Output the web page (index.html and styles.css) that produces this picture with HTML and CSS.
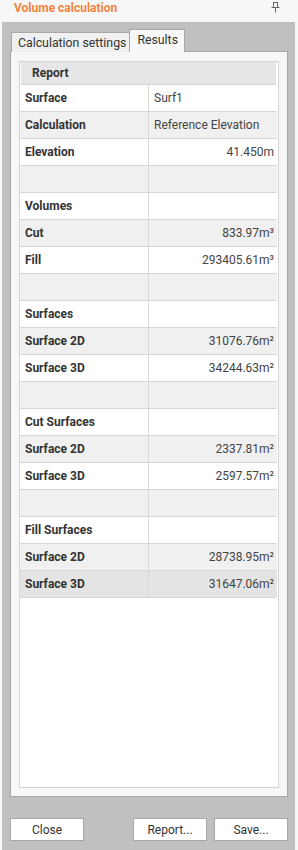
FILE: index.html
```html
<!DOCTYPE html>
<html lang="en">
<head>
  <meta charset="UTF-8" />
  <title>Volume calculation</title>
  <link rel="stylesheet" href="styles.css">
</head>
<body>
  <div class="window">
    <div class="titlebar">
      <span class="title">Volume calculation</span>
      <svg class="pin" width="9" height="11" viewBox="0 0 9 11">
        <path d="M2 0.5h5M2.5 0.5v5M6.5 0.5v5M0.5 5.5h8M4.5 5.5v5" stroke="#666" stroke-width="1" fill="none"/>
      </svg>
    </div>

    <div class="client">
      <div class="tabs">
        <div class="tab">Calculation settings</div>
        <div class="tab active">Results</div>
      </div>

      <div class="pane">
        <div class="report">
          <div class="report-head">Report</div>
          <table class="grid">
            <tr><td>Surface</td><td class="txt">Surf1</td></tr>
            <tr class="alt"><td>Calculation</td><td class="txt">Reference Elevation</td></tr>
            <tr><td>Elevation</td><td>41.450m</td></tr>
            <tr class="alt"><td></td><td></td></tr>
            <tr><td>Volumes</td><td></td></tr>
            <tr class="alt"><td>Cut</td><td>833.97m³</td></tr>
            <tr><td>Fill</td><td>293405.61m³</td></tr>
            <tr class="alt"><td></td><td></td></tr>
            <tr><td>Surfaces</td><td></td></tr>
            <tr class="alt"><td>Surface 2D</td><td>31076.76m²</td></tr>
            <tr><td>Surface 3D</td><td>34244.63m²</td></tr>
            <tr class="alt"><td></td><td></td></tr>
            <tr><td>Cut Surfaces</td><td></td></tr>
            <tr class="alt"><td>Surface 2D</td><td>2337.81m²</td></tr>
            <tr><td>Surface 3D</td><td>2597.57m²</td></tr>
            <tr class="alt"><td></td><td></td></tr>
            <tr><td>Fill Surfaces</td><td></td></tr>
            <tr class="alt"><td>Surface 2D</td><td>28738.95m²</td></tr>
            <tr class="sel"><td>Surface 3D</td><td>31647.06m²</td></tr>
          </table>
        </div>
      </div>

      <div class="buttons">
        <button>Close</button>
        <span class="spacer"></span>
        <button>Report...</button>
        <button>Save...</button>
      </div>
    </div>
  </div>
</body>
</html>
```

FILE: styles.css
```css
body {
  margin: 0;
  width: 298px;
  height: 850px;
  background: #f7f7f7;
  font-family: Roboto, "Liberation Sans", sans-serif;
  font-size: 12px;
  color: #333;
  overflow: hidden;
}

.window {
  display: flex;
  flex-direction: column;
  height: 850px;
}

.titlebar {
  height: 22px;
  display: flex;
  align-items: center;
  justify-content: space-between;
  padding: 0 18px 0 14px;
}

.title {
  color: #f5843f;
  font-weight: bold;
  font-size: 12px;
  margin-top: -7px;
}

.pin {
  margin-top: -7px;
}

.client {
  flex: 1;
  margin: 0 3px 0 2px;
  background: #c0c0c0;
  padding: 8px 7px 0 8px;
  display: flex;
  flex-direction: column;
}

.tabs {
  display: flex;
  padding-left: 1px;
  align-items: flex-end;
  height: 22px;
  margin-bottom: -1px;
  position: relative;
  z-index: 1;
}

.tab {
  height: 19px;
  line-height: 20px;
  padding: 0 3px 0 6px;
  background: #f0f0f0;
  border: 1px solid #a8a8a8;
  border-bottom: none;
  font-size: 12.3px;
  color: #333;
}

.tab.active {
  height: 22px;
  line-height: 20px;
  background: #f7f7f7;
  padding: 0 6px 0 7px;
  margin-left: -1px;
}

.pane {
  height: 746px;
  background: #f7f7f7;
  border: 1px solid #a8a8a8;
  padding: 9px 8px 8px 8px;
  box-sizing: border-box;
  display: flex;
}

.report {
  flex: 1;
  background: #fff;
  border: 1px solid #d4d4d4;
  padding: 0 1px 0 0;
}

.report-head {
  height: 22px;
  line-height: 23px;
  margin-left: 1px;
  margin-right: 1px;
  background: #e6e6e6;
  border-bottom: 1px solid #d4d4d4;
  font-weight: bold;
  padding-left: 11px;
  color: #333;
}

.grid {
  width: 257px;
  border-collapse: collapse;
  table-layout: fixed;
}

.grid td {
  height: 26px;
  padding: 0;
  border: 1px solid #d8d8d8;
  border-top: none;
  white-space: nowrap;
  overflow: hidden;
}

.grid td:first-child {
  width: 123px;
  padding-left: 5px;
  font-weight: bold;
  border-left: none;
}

.grid td:last-child {
  text-align: right;
  padding-right: 3px;
  border-right: none;
  color: #444;
}

.grid td.txt {
  text-align: left;
  padding-left: 5px;
}

.grid tr.alt td {
  background: #f0f0f0;
}

.grid tr.sel td {
  background: #e4e4e4;
}

.buttons {
  display: flex;
  gap: 7px;
  margin-top: 21px;
}

.spacer {
  flex: 1;
}

button {
  width: 74px;
  height: 23px;
  background: #fff;
  border: 1px solid #a8a8a8;
  border-radius: 0;
  font-family: Roboto, "Liberation Sans", sans-serif;
  font-size: 12px;
  color: #333;
  padding: 0;
}
```
